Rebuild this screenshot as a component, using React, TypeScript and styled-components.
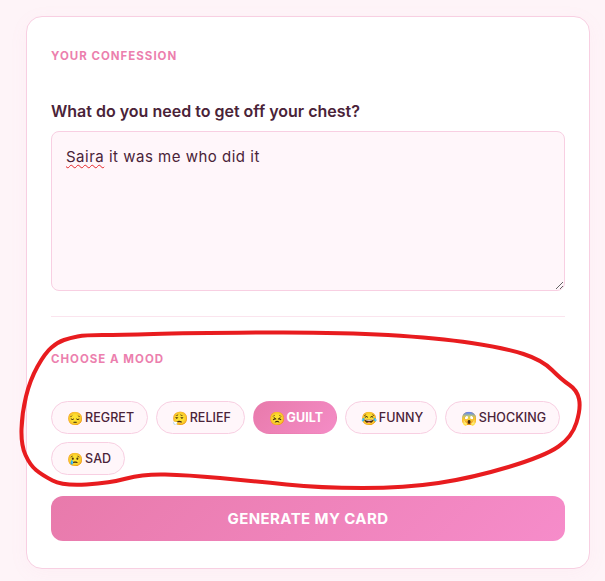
import React from 'react';
import styled, { createGlobalStyle } from 'styled-components';

const moods = [
  { emoji: '😔', name: 'REGRET' },
  { emoji: '😮‍💨', name: 'RELIEF' },
  { emoji: '😣', name: 'GUILT', active: true },
  { emoji: '😂', name: 'FUNNY' },
  { emoji: '😱', name: 'SHOCKING' },
  { emoji: '😢', name: 'SAD' },
];

const GlobalStyle = createGlobalStyle`
  html, body {
    margin: 0;
    padding: 0;
    background: #fef4f8;
    overflow: hidden;
  }
`;

const Page = styled.div`
  position: relative;
  box-sizing: border-box;
  width: 605px;
  height: 581px;
  padding: 16px 15px 12px 26px;
  background: #fef4f8;
  font-family: Inter, 'Liberation Sans', sans-serif;
`;

const Card = styled.section`
  box-sizing: border-box;
  height: 553px;
  padding: 32px 24px 0;
  background: #fff;
  border: 1px solid #f8cfe2;
  border-radius: 16px;
  box-shadow: 0 4px 20px rgba(240, 130, 180, 0.05);
`;

const SectionTitle = styled.h2`
  margin: 0;
  font-size: 11.5px;
  line-height: 14px;
  font-weight: 700;
  letter-spacing: 1px;
  color: #ec7fae;
`;

const Question = styled.label`
  display: block;
  margin: 38px 0 10px;
  font-size: 16px;
  line-height: 20px;
  font-weight: 600;
  color: #4a2338;
`;

const Confession = styled.div`
  box-sizing: border-box;
  height: 160px;
  padding: 14px;
  background: #fff6fa;
  border: 1px solid #f8cfe2;
  border-radius: 8px;
  font-size: 15px;
  line-height: 22px;
  letter-spacing: 0.5px;
  color: #4a2338;
  resize: vertical;
  overflow: auto;
`;

const Misspelled = styled.span`
  text-decoration: underline wavy #e5262a 1px;
  text-underline-offset: 2px;
`;

const Divider = styled.hr`
  margin: 25px 0 35px;
  border: 0;
  border-top: 1px solid #fbe4ee;
`;

const MoodList = styled.div`
  display: flex;
  flex-wrap: wrap;
  gap: 8px;
  margin-top: 35px;
`;

const Chip = styled.button<{ $active?: boolean }>`
  display: flex;
  align-items: center;
  gap: 2px;
  height: 33px;
  padding: 0 12.5px 0 15px;
  border: 1px solid ${(props) => (props.$active ? 'transparent' : '#f8cfe2')};
  border-radius: 17px;
  background: ${(props) => (props.$active ? 'linear-gradient(135deg, #e87aab, #f48cc6)' : '#fff6fa')};
  color: ${(props) => (props.$active ? '#fff' : '#4a2338')};
  font-family: inherit;
  font-size: 12.5px;
  letter-spacing: 0.05px;
  font-weight: ${(props) => (props.$active ? 700 : 500)};
`;

const ChipEmoji = styled.span`
  font-size: 13px;
`;

const SubmitButton = styled.button`
  display: block;
  width: 100%;
  height: 45px;
  margin-top: 21px;
  border: 0;
  border-radius: 12px;
  background: linear-gradient(135deg, #e87aab, #f68cca);
  color: #fff;
  font-family: inherit;
  font-size: 15px;
  font-weight: 700;
  letter-spacing: 0.4px;
`;

const Scribble = styled.svg`
  position: absolute;
  inset: 0;
  pointer-events: none;
`;

const scribblePoints = [
  [85, 335], [70, 338], [58, 342], [45, 353], [30, 380], [22, 413], [21, 445], [30, 465], [42, 475], [63, 486], [110, 483], [143, 474],
  [187, 475], [253, 481], [320, 488], [405, 488], [472, 478], [545, 456], [572, 437], [581, 408], [577, 390],
  [562, 380], [542, 360], [505, 348], [438, 338], [338, 332], [187, 333], [120, 335],
];

function smoothPath(points: number[][]) {
  const mid = (a: number[], b: number[]) => `${(a[0] + b[0]) / 2} ${(a[1] + b[1]) / 2}`;
  const last = points[points.length - 1];
  let d = `M${mid(last, points[0])}`;
  points.forEach((point, i) => {
    const next = points[(i + 1) % points.length];
    d += ` Q${point[0]} ${point[1]} ${mid(point, next)}`;
  });
  return d;
}

function App() {
  return (
    <Page>
      <GlobalStyle />
      <Card>
        <SectionTitle>YOUR CONFESSION</SectionTitle>
        <Question>What do you need to get off your chest?</Question>
        <Confession>
          <Misspelled>Saira</Misspelled> it was me who did it
        </Confession>
        <Divider />
        <SectionTitle>CHOOSE A MOOD</SectionTitle>
        <MoodList>
          {moods.map((mood) => (
            <Chip key={mood.name} $active={mood.active}>
              <ChipEmoji>{mood.emoji}</ChipEmoji>
              {mood.name}
            </Chip>
          ))}
        </MoodList>
        <SubmitButton>GENERATE MY CARD</SubmitButton>
      </Card>
      <Scribble width="605" height="581" viewBox="0 0 605 581">
        <path d={smoothPath(scribblePoints)} fill="none" stroke="#e81c1f" strokeWidth="4" strokeLinejoin="round" />
      </Scribble>
    </Page>
  );
}

export default App;
